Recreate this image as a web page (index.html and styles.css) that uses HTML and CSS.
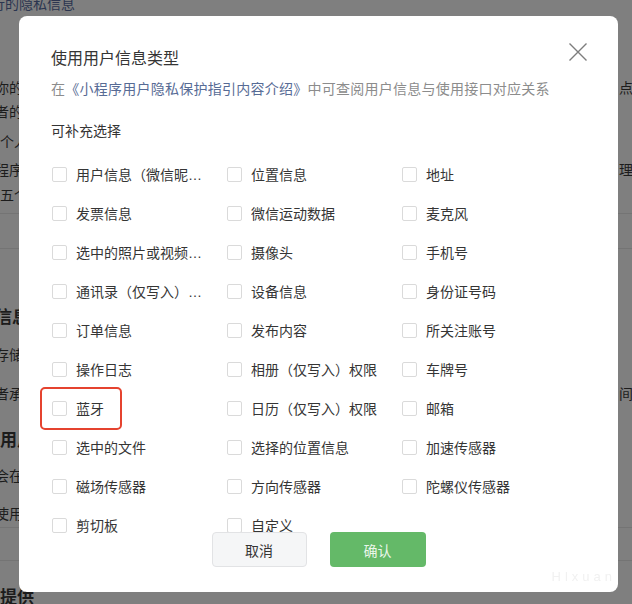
FILE: index.html
```html
<!DOCTYPE html>
<html lang="zh-CN">
<head>
<meta charset="utf-8">
<title>使用用户信息类型</title>
<link rel="stylesheet" href="styles.css">
</head>
<body>
<div class="page">
  <div class="bl link shift"><span>行的隐私信息</span></div>
  <div class="bl m60"><span>你的使用者</span><span class="r">点击</span></div>
  <div class="bl"><span>者的信息</span></div>
  <div class="bl m6 in"><span>个人信息</span></div>
  <div class="bl m4"><span>程序处理</span><span class="r">理你</span></div>
  <div class="bl m1 in"><span>五个工作日</span></div>
  <div class="hr m6"></div>
  <div class="hr m34"></div>
  <div class="bl h m57"><span>信息存储</span></div>
  <div class="bl m13"><span>存储期限</span></div>
  <div class="bl m15"><span>者承诺</span><span class="r">间</span></div>
  <div class="bl h m23 in"><span>用户权益</span></div>
  <div class="bl m11"><span>会在</span></div>
  <div class="bl m14"><span>使用</span></div>
  <div class="hr m1"></div>
  <div class="hr m32"></div>
  <div class="bl h m25 in"><span>提供</span></div>
</div>

<div class="modal" role="dialog" aria-labelledby="dlg-title">
  <button class="close" aria-label="关闭">
    <svg width="18" height="18" viewBox="0 0 18 18"><path d="M0.5 0.5L17.5 17.5M17.5 0.5L0.5 17.5" stroke="#7d7d7d" stroke-width="1.4" fill="none"/></svg>
  </button>
  <h2 class="title" id="dlg-title">使用用户信息类型</h2>
  <p class="sub">在<a class="lnk">《小程序用户隐私保护指引内容介绍》</a>中可查阅用户信息与使用接口对应关系</p>
  <p class="section">可补充选择</p>
  <ul class="grid">
    <li class="item"><span class="box"></span><span class="label">用户信息（微信昵称、头像）</span></li>
    <li class="item"><span class="box"></span><span class="label">位置信息</span></li>
    <li class="item"><span class="box"></span><span class="label">地址</span></li>
    <li class="item"><span class="box"></span><span class="label">发票信息</span></li>
    <li class="item"><span class="box"></span><span class="label">微信运动数据</span></li>
    <li class="item"><span class="box"></span><span class="label">麦克风</span></li>
    <li class="item"><span class="box"></span><span class="label">选中的照片或视频信息</span></li>
    <li class="item"><span class="box"></span><span class="label">摄像头</span></li>
    <li class="item"><span class="box"></span><span class="label">手机号</span></li>
    <li class="item"><span class="box"></span><span class="label">通讯录（仅写入）权限</span></li>
    <li class="item"><span class="box"></span><span class="label">设备信息</span></li>
    <li class="item"><span class="box"></span><span class="label">身份证号码</span></li>
    <li class="item"><span class="box"></span><span class="label">订单信息</span></li>
    <li class="item"><span class="box"></span><span class="label">发布内容</span></li>
    <li class="item"><span class="box"></span><span class="label">所关注账号</span></li>
    <li class="item"><span class="box"></span><span class="label">操作日志</span></li>
    <li class="item"><span class="box"></span><span class="label">相册（仅写入）权限</span></li>
    <li class="item"><span class="box"></span><span class="label">车牌号</span></li>
    <li class="item"><span class="box"></span><span class="label">蓝牙</span><span class="mark"></span></li>
    <li class="item"><span class="box"></span><span class="label">日历（仅写入）权限</span></li>
    <li class="item"><span class="box"></span><span class="label">邮箱</span></li>
    <li class="item"><span class="box"></span><span class="label">选中的文件</span></li>
    <li class="item"><span class="box"></span><span class="label">选择的位置信息</span></li>
    <li class="item"><span class="box"></span><span class="label">加速传感器</span></li>
    <li class="item"><span class="box"></span><span class="label">磁场传感器</span></li>
    <li class="item"><span class="box"></span><span class="label">方向传感器</span></li>
    <li class="item"><span class="box"></span><span class="label">陀螺仪传感器</span></li>
    <li class="item"><span class="box"></span><span class="label">剪切板</span></li>
    <li class="item"><span class="box"></span><span class="label">自定义</span></li>
  </ul>
  <div class="footer">
    <button class="btn cancel">取消</button>
    <button class="btn ok">确认</button>
  </div>
  <div class="wm">Hlxuan</div>
</div>
</body>
</html>
```

FILE: styles.css
```css
html, body {
  margin: 0;
  padding: 0;
}
body {
  background: #7f7f7f;
  overflow: hidden;
  font-family: "Liberation Sans", "Noto Sans CJK SC", sans-serif;
  height: 604px;
}

/* dimmed page behind the dialog */
.page {
  margin: -8px -8px 0 -5px;
  color: #1c1c1c;
  font-size: 14px;
}
.bl {
  display: flex;
  justify-content: space-between;
  height: 24px;
  line-height: 24px;
  white-space: nowrap;
}
.bl .r {
  width: 21px;
  overflow: visible;
}
.bl.in { padding-left: 5px; }
.bl.shift { margin-left: -4px; }
.link { color: #2b3550; }
.h {
  font-weight: bold;
  font-size: 17px;
}
.hr {
  height: 1px;
  background: #747474;
}
.m1 { margin-top: 1px; }
.m4 { margin-top: 4px; }
.m6 { margin-top: 6px; }
.m11 { margin-top: 11px; }
.m13 { margin-top: 13px; }
.m14 { margin-top: 14px; }
.m15 { margin-top: 15px; }
.m23 { margin-top: 23px; }
.m25 { margin-top: 25px; }
.m32 { margin-top: 32px; }
.m34 { margin-top: 34px; }
.m57 { margin-top: 57px; }
.m60 { margin-top: 60px; }

/* dialog */
.modal {
  position: fixed;
  left: 19px;
  top: 16px;
  width: 599px;
  height: 576px;
  box-sizing: border-box;
  padding: 31px 32px 0;
  background: #fff;
  border-radius: 8px;
  color: #353535;
  font-size: 14px;
}
.close {
  position: absolute;
  left: 550px;
  top: 27px;
  width: 18px;
  height: 18px;
  padding: 0;
  border: 0;
  background: none;
  display: block;
}
.close svg { display: block; }
.title {
  margin: 0;
  font-size: 16px;
  font-weight: normal;
  line-height: 24px;
  color: #353535;
}
.sub {
  margin: 8px 0 0;
  line-height: 20px;
  color: #8c8c8c;
  white-space: nowrap;
  letter-spacing: 0.25px;
}
.lnk { color: #576b95; }
.section {
  margin: 22px 0 0;
  line-height: 20px;
  color: #353535;
}
.grid {
  list-style: none;
  margin: 14px 0 0;
  padding: 0;
  display: grid;
  grid-template-columns: repeat(3, 175px);
  grid-auto-rows: 39px;
}
.item {
  position: relative;
  display: flex;
  align-items: center;
}
.box {
  flex: none;
  width: 15px;
  height: 15px;
  margin-left: 1px;
  box-sizing: border-box;
  border: 1px solid #dadada;
  border-radius: 2px;
  background: #fff;
}
.label {
  margin-left: 9px;
  max-width: 126px;
  overflow: hidden;
  text-overflow: ellipsis;
  white-space: nowrap;
  line-height: 20px;
  color: #353535;
}
.mark {
  position: absolute;
  left: -11px;
  top: -2px;
  width: 82px;
  height: 43px;
  box-sizing: border-box;
  border: 2px solid #e5432f;
  border-radius: 5px;
}
.footer {
  position: absolute;
  left: 0;
  right: 0;
  bottom: 25px;
  display: flex;
  justify-content: center;
  gap: 23px;
}
.btn {
  height: 35px;
  border-radius: 4px;
  font-family: inherit;
  font-size: 14px;
  padding: 0;
}
.cancel {
  width: 95px;
  background: #f5f6f7;
  border: 1px solid #e2e3e5;
  color: #353535;
}
.ok {
  width: 96px;
  background: #64b968;
  border: 0;
  color: #eaf6ea;
}
.wm {
  position: absolute;
  right: 2px;
  bottom: 8px;
  font-size: 13px;
  letter-spacing: 4px;
  color: #f1f1f1;
}
```
